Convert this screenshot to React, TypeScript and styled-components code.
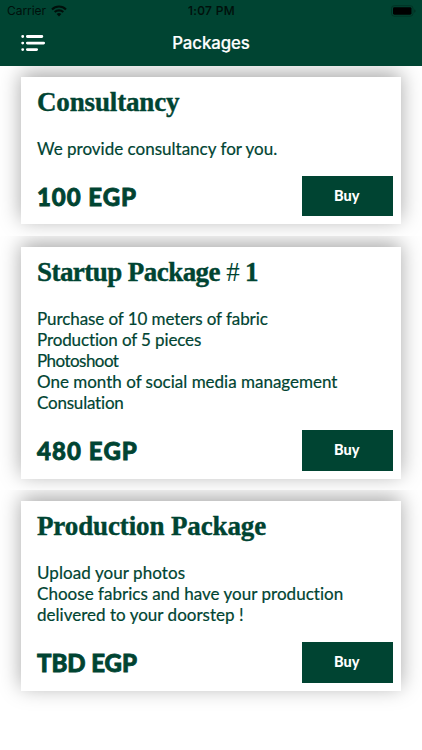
import React from "react";
import styled, { createGlobalStyle } from "styled-components";

const GREEN = "#004432";

const GlobalStyle = createGlobalStyle`
  * { box-sizing: border-box; }
  body { margin: 0; background: #fff; }
`;

const Screen = styled.div`
  width: 100%;
  height: 750px;
  overflow: hidden;
  background: #fff;
  color: ${GREEN};
`;

const Header = styled.header`
  height: 65.6px;
  background: ${GREEN};
  font-family: Inter, sans-serif;
`;

const StatusBar = styled.div`
  display: grid;
  grid-template-columns: 1fr auto 1fr;
  align-items: center;
  height: 21px;
  padding: 1px 6px 0 7px;
  color: #00100b;
  font-size: 12px;
  line-height: 20px;
`;

const Carrier = styled.div`
  display: flex;
  align-items: center;
  gap: 5px;
  letter-spacing: -0.05px;
`;

const Clock = styled.time`
  font-weight: 500;
  letter-spacing: 0.3px;
  -webkit-text-stroke: 0.1px;
`;

const BatteryIcon = styled.svg`
  justify-self: end;
`;

const NavBar = styled.nav`
  display: grid;
  grid-template-columns: 1fr auto 1fr;
  align-items: center;
  height: 44px;
  padding: 0 21px;
`;

const MenuButton = styled.button`
  display: flex;
  padding: 0;
  border: 0;
  background: none;
`;

const NavTitle = styled.h1`
  margin: 0;
  color: #fff;
  font-size: 16.8px;
  font-weight: 500;
  line-height: 24px;
  letter-spacing: -0.05px;
  -webkit-text-stroke: 0.2px;
`;

const Cell = styled.section`
  overflow: hidden;
  padding: 11.3px 21px;
`;

const LastCell = styled(Cell)`
  padding-bottom: 40px;
`;

const Card = styled.article`
  padding: 10px 8px 8px 16px;
  background: #fff;
  box-shadow: 0 -4px 20px rgba(0, 0, 0, 0.35);
`;

const Title = styled.h2<{ $tracking: number }>`
  margin: 0;
  font: 700 27px/31px "Liberation Serif", serif;
  letter-spacing: ${(p) => p.$tracking}px;
  white-space: nowrap;
  -webkit-text-stroke: 0.4px;
`;

const Light = styled.span`
  font-weight: 400;
  letter-spacing: -0.8px;
  -webkit-text-stroke: 0;
`;

const Description = styled.div`
  margin-top: 19.8px;
  font-family: Lato, sans-serif;
  font-size: 17px;
  line-height: 21.1px;
  font-variant-ligatures: none;
  -webkit-text-stroke: 0.2px;
`;

const Line = styled.p<{ $tracking: number }>`
  margin: 0;
  letter-spacing: ${(p) => p.$tracking}px;
  white-space: nowrap;
`;

const Footer = styled.footer`
  display: flex;
  align-items: center;
  justify-content: space-between;
  margin-top: 16.8px;
`;

const Price = styled.strong<{ $tracking: number }>`
  padding-top: 1px;
  font: 900 24px/39px Lato, sans-serif;
  letter-spacing: ${(p) => p.$tracking}px;
  -webkit-text-stroke: 0.8px;
`;

const BuyButton = styled.button`
  width: 91.4px;
  height: 40.7px;
  padding: 0 1px 0 0;
  border: 0;
  background: ${GREEN};
  color: #fff;
  font: 900 14.5px/20px Lato, sans-serif;
`;

type Tracked = { text: string; tracking: number };
type Package = { title: React.ReactNode; titleTracking: number; lines: Tracked[]; price: Tracked };

const packages: Package[] = [
  {
    title: "Consultancy",
    titleTracking: -0.15,
    lines: [{ text: "We provide consultancy for you.", tracking: 0.01 }],
    price: { text: "100 EGP", tracking: 0.95 },
  },
  {
    title: <>Startup Package <Light>#</Light> 1</>,
    titleTracking: -0.55,
    lines: [
      { text: "Purchase of 10 meters of fabric", tracking: -0.08 },
      { text: "Production of 5 pieces", tracking: -0.12 },
      { text: "Photoshoot", tracking: -0.55 },
      { text: "One month of social media management", tracking: 0 },
      { text: "Consulation", tracking: -0.2 },
    ],
    price: { text: "480 EGP", tracking: 1.1 },
  },
  {
    title: "Production Package",
    titleTracking: -0.12,
    lines: [
      { text: "Upload your photos", tracking: 0.08 },
      { text: "Choose fabrics and have your production", tracking: 0.03 },
      { text: "delivered to your doorstep !", tracking: 0.02 },
    ],
    price: { text: "TBD EGP", tracking: -0.05 },
  },
];

function WifiIcon() {
  return (
    <svg width="16" height="12" viewBox="0 0 16 12" fill="none" stroke="#00100b" strokeWidth="2.1">
      <path d="M1 4.4a9.9 9.9 0 0 1 14 0" />
      <path d="M3.7 7.1a6.1 6.1 0 0 1 8.6 0" />
      <path d="M8 11.5 5.6 9.1a3.4 3.4 0 0 1 4.8 0Z" fill="#00100b" stroke="none" />
    </svg>
  );
}

function Battery() {
  return (
    <BatteryIcon width="25" height="12" viewBox="0 0 25 12">
      <rect x="0.5" y="0.7" width="21.5" height="10.5" rx="2.8" fill="none" stroke="#003325" />
      <rect x="2" y="2.2" width="18.5" height="7.5" rx="1.4" fill="#000" />
      <path d="M23.3 4.2v3.6q1.2-.5 1.2-1.8t-1.2-1.8Z" fill="#002d20" />
    </BatteryIcon>
  );
}

function MenuIcon() {
  return (
    <svg width="25" height="18" viewBox="0 0 25 18" fill="none" stroke="#fff" strokeWidth="2.9" strokeLinecap="round">
      <path d="M1.7 2.5h.01M1.7 9.1h.01M1.7 15.6h.01M6.4 2.5h14.4M6.4 9.1h16.2M6.4 15.6h9.2" />
    </svg>
  );
}

export default function App() {
  return (
    <Screen>
      <GlobalStyle />
      <Header>
        <StatusBar>
          <Carrier>
            Carrier <WifiIcon />
          </Carrier>
          <Clock>1:07 PM</Clock>
          <Battery />
        </StatusBar>
        <NavBar>
          <MenuButton aria-label="Menu">
            <MenuIcon />
          </MenuButton>
          <NavTitle>Packages</NavTitle>
        </NavBar>
      </Header>
      <main>
        {packages.map((item, index) => {
          const Row = index === packages.length - 1 ? LastCell : Cell;
          return (
            <Row key={item.price.text}>
              <Card>
                <Title $tracking={item.titleTracking}>{item.title}</Title>
                <Description>
                  {item.lines.map((line) => (
                    <Line key={line.text} $tracking={line.tracking}>
                      {line.text}
                    </Line>
                  ))}
                </Description>
                <Footer>
                  <Price $tracking={item.price.tracking}>{item.price.text}</Price>
                  <BuyButton>Buy</BuyButton>
                </Footer>
              </Card>
            </Row>
          );
        })}
      </main>
    </Screen>
  );
}
